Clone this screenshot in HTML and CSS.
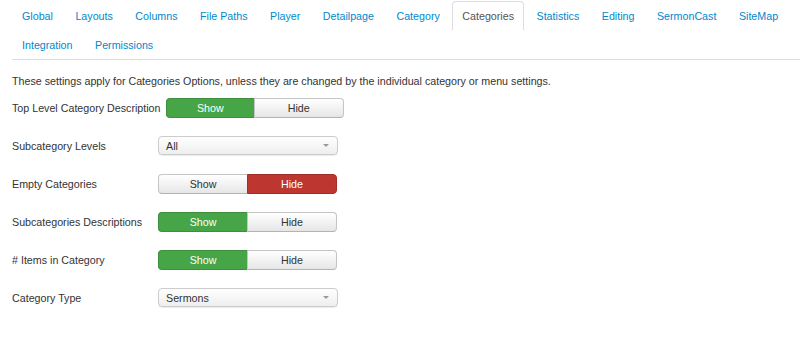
FILE: index.html
```html
<!DOCTYPE html>
<html lang="en">
<head>
    <meta charset="UTF-8">
    <title>Categories Options</title>
    <link rel="stylesheet" href="styles.css">
</head>
<body>

<ul class="nav-tabs">
    <li><a href="#">Global</a></li>
    <li><a href="#">Layouts</a></li>
    <li><a href="#">Columns</a></li>
    <li><a href="#">File Paths</a></li>
    <li><a href="#">Player</a></li>
    <li><a href="#">Detailpage</a></li>
    <li><a href="#">Category</a></li>
    <li class="active"><a href="#">Categories</a></li>
    <li><a href="#">Statistics</a></li>
    <li><a href="#">Editing</a></li>
    <li><a href="#">SermonCast</a></li>
    <li><a href="#">SiteMap</a></li>
    <li><a href="#">Integration</a></li>
    <li><a href="#">Permissions</a></li>
</ul>

<div class="tab-content">
    <p class="tab-description">These settings apply for Categories Options, unless they are changed by the individual category or menu settings.</p>

    <div class="control-group">
        <label class="control-label">Top Level Category Description</label>
        <div class="btn-group wide">
            <span class="btn active-success">Show</span>
            <span class="btn">Hide</span>
        </div>
    </div>

    <div class="control-group">
        <label class="control-label">Subcategory Levels</label>
        <div class="select-box">
            <span>All</span>
            <span class="caret"></span>
        </div>
    </div>

    <div class="control-group">
        <label class="control-label">Empty Categories</label>
        <div class="btn-group">
            <span class="btn">Show</span>
            <span class="btn active-danger">Hide</span>
        </div>
    </div>

    <div class="control-group">
        <label class="control-label">Subcategories Descriptions</label>
        <div class="btn-group">
            <span class="btn active-success">Show</span>
            <span class="btn">Hide</span>
        </div>
    </div>

    <div class="control-group">
        <label class="control-label"># Items in Category</label>
        <div class="btn-group">
            <span class="btn active-success">Show</span>
            <span class="btn">Hide</span>
        </div>
    </div>

    <div class="control-group">
        <label class="control-label">Category Type</label>
        <div class="select-box">
            <span>Sermons</span>
            <span class="caret"></span>
        </div>
    </div>
</div>

</body>
</html>
```

FILE: styles.css
```css
body {
    font-family: "Liberation Sans", Arial, sans-serif;
    font-size: 10.7px;
    line-height: 18px;
    margin: 0;
    padding: 0;
    color: #333;
    background: #fff;
}
.nav-tabs {
    list-style: none;
    display: flex;
    flex-wrap: wrap;
    margin: 1px 0 0 12px;
    padding: 0;
    border-bottom: 1px solid #ddd;
}
.nav-tabs li {
    margin-right: 2.5px;
}
.nav-tabs a {
    display: block;
    padding: 5px 9px;
    line-height: 18px;
    color: #0088cc;
    text-decoration: none;
    border: 1px solid transparent;
    border-bottom: none;
    border-radius: 4px 4px 0 0;
}
.nav-tabs .active a {
    color: #555;
    border-color: #ddd;
    background: #fff;
}
.tab-content {
    padding: 12px 12px 0 12px;
}
.tab-description {
    margin: 0 0 8px 0;
}
.control-group {
    display: flex;
    align-items: flex-start;
    min-height: 20px;
    margin-bottom: 18px;
}
.control-label {
    min-width: 141px;
    margin-right: 5px;
    padding-top: 1px;
    white-space: nowrap;
}
.btn-group {
    display: flex;
    width: 179px;
}
.btn-group.wide {
    width: 178px;
}
.btn {
    flex: 1;
    height: 18px;
    line-height: 18px;
    text-align: center;
    color: #333;
    border: 1px solid #c5c5c5;
    border-bottom-color: #b3b3b3;
    background: linear-gradient(#ffffff, #e6e6e6);
}
.btn:first-child {
    border-radius: 4px 0 0 4px;
    border-right: none;
}
.btn:last-child {
    border-radius: 0 4px 4px 0;
}
.btn.active-success {
    color: #fff;
    background: #46a546;
    border-color: #3d8f3d;
}
.btn.active-danger {
    color: #fff;
    background: #bd362f;
    border-color: #a32d27;
}
.select-box {
    display: flex;
    align-items: center;
    justify-content: space-between;
    width: 163px;
    height: 17px;
    padding: 0 8px 0 7px;
    border: 1px solid #ccc;
    border-radius: 4px;
    background: linear-gradient(#ffffff, #eeeeee);
    box-shadow: 0 1px 1px rgba(0, 0, 0, 0.08);
}
.caret {
    width: 0;
    height: 0;
    border-left: 3px solid transparent;
    border-right: 3px solid transparent;
    border-top: 3px solid #999;
}
```
